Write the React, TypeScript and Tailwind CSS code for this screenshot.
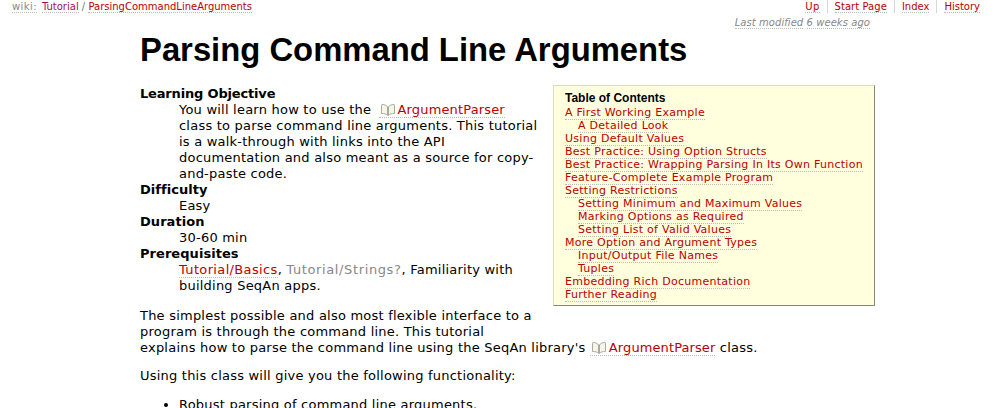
const Book = () => (
  <svg width="14" height="12" viewBox="0 0 14 12" className="inline-block align-[-2px] ml-[2px] mr-[3px]" fill="#f6f5ea" stroke="#aaaa9c" strokeWidth="1">
    <path d="M6.5 3 C6 1.5 3.5 .5 1 .5 C.5 .5 .5 1 .5 1.5 V9.5 C3.5 9.5 5.5 10 6.5 11.5 Z" />
    <path d="M7.5 3 C8 1.5 10.5 .5 13 .5 C13.5 .5 13.5 1 13.5 1.5 V9.5 C10.5 9.5 8.5 10 7.5 11.5 Z" />
  </svg>
);

const A = ({ children, c = "text-[#bb0000]" }: { children: React.ReactNode; c?: string }) => (
  <a className={`${c} border-b border-dotted border-[#bbbbbb]`}>{children}</a>
);

const toc: [string, boolean][] = [
  ["A First Working Example", false],
  ["A Detailed Look", true],
  ["Using Default Values", false],
  ["Best Practice: Using Option Structs", false],
  ["Best Practice: Wrapping Parsing In Its Own Function", false],
  ["Feature-Complete Example Program", false],
  ["Setting Restrictions", false],
  ["Setting Minimum and Maximum Values", true],
  ["Marking Options as Required", true],
  ["Setting List of Valid Values", true],
  ["More Option and Argument Types", false],
  ["Input/Output File Names", true],
  ["Tuples", true],
  ["Embedding Rich Documentation", false],
  ["Further Reading", false],
];

export default function App() {
  return (
    <div className="h-[408px] overflow-hidden bg-white text-black font-['DejaVu_Sans',sans-serif] text-[13px] leading-4 tracking-[0.22px]">
      <div className="flex justify-between pl-[12px] pr-[17px] text-[10px] leading-[13px] tracking-normal">
        <div>
          <span className="text-[#888888] border-b border-dotted border-[#bbbbbb] tracking-[0.4px]">wiki:</span>
          <span className="ml-[5px]"><A c="text-[#a0105a]">Tutorial</A></span> <span className="text-[#777777]">/</span>{" "}
          <A>ParsingCommandLineArguments</A>
        </div>
        <div className="flex">
          <span className="pr-[7px] tracking-[0.3px]"><A>Up</A></span>
          <span className="border-l border-[#d7d7d7] px-[7px] tracking-[0.05px]"><A>Start Page</A></span>
          <span className="border-l border-[#d7d7d7] px-[7px]"><A>Index</A></span>
          <span className="border-l border-[#d7d7d7] pl-[7px]"><A>History</A></span>
        </div>
      </div>
      <div className="flex justify-end pr-[127px] pt-[3px] text-[10px] leading-[13px] italic text-[#888888] tracking-[0.06px]">
        <span><span className="border-b border-dotted border-[#bbbbbb]">Last modified</span> <span className="border-b border-dotted border-[#bbbbbb]">6 weeks ago</span></span>
      </div>
      <div className="pl-[140px] pr-[122px]">
        <h1 className="font-['Liberation_Sans',sans-serif] font-bold text-[32.8px] leading-[37px] pt-[2px] pb-[1px] tracking-normal">Parsing Command Line Arguments</h1>
        <div className="float-right w-[322px] h-[221px] ml-[13px] mt-[16px] mb-[26px] bg-[#ffffdd] border border-[#dcdcc4] border-r-[#888877] border-b-[#888877] pl-[11px] pt-[5px] text-[11px] leading-[13px] tracking-[0.27px]">
          <div className="font-['Liberation_Sans',sans-serif] font-bold text-[12px] leading-[14px] pb-[1px] tracking-normal">Table of Contents</div>
          {toc.map(([t, indent]) => (
            <div key={t} className={indent ? "pl-[13px]" : ""}><A>{t}</A></div>
          ))}
        </div>
        <dl className="pt-[17px]">
          <dt className="font-bold tracking-[-0.17px]">Learning Objective</dt>
          <dd className="pl-[39px]">You will learn how to use the <span className="ml-[3px] border-b border-dotted border-[#bbbbbb]"><Book /><span className="text-[#bb0000] tracking-[0.15px]">ArgumentParser</span></span> class to parse command line arguments. This tutorial is a walk-through with links into the API documentation and also meant as a source for copy-and-paste code.</dd>
          <dt className="font-bold tracking-[0.05px]">Difficulty</dt>
          <dd className="pl-[39px]">Easy</dd>
          <dt className="font-bold tracking-[0.05px]">Duration</dt>
          <dd className="pl-[39px]">30-60 min</dd>
          <dt className="font-bold tracking-[0.05px]">Prerequisites</dt>
          <dd className="pl-[39px]"><A><span className="tracking-[0.35px]">Tutorial/Basics</span></A>, <span className="text-[#888888] tracking-[0.62px]">Tutorial/Strings?</span>, Familiarity with building SeqAn apps.</dd>
        </dl>
        <p className="mt-[14px]">The simplest possible and also most flexible interface to a program is through the command line. This tutorial explains how to parse the command line using the SeqAn library's <span className="border-b border-dotted border-[#bbbbbb]"><Book /><span className="text-[#bb0000] tracking-[0.1px]">ArgumentParser</span></span> class.</p>
        <p className="mt-[12px]">Using this class will give you the following functionality:</p>
        <ul className="list-disc pl-[39px] mt-[13px]">
          <li>Robust parsing of command line arguments.</li>
        </ul>
      </div>
    </div>
  );
}
